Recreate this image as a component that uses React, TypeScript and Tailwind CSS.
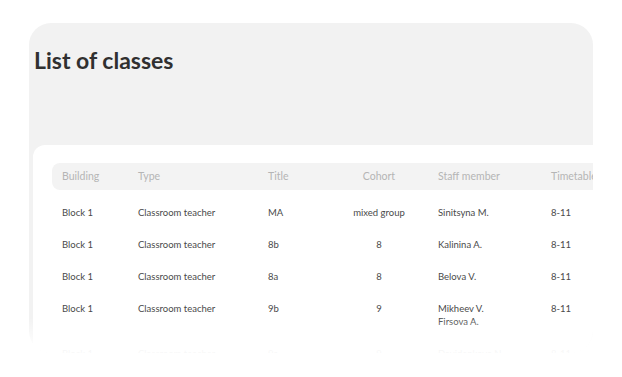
import React from 'react';

interface ClassRow {
  building: string;
  type: string;
  title: string;
  cohort: string;
  staff: string[];
  timetable: string;
}

const rows: ClassRow[] = [
  { building: 'Block 1', type: 'Classroom teacher', title: 'MA', cohort: 'mixed group', staff: ['Sinitsyna M.'], timetable: '8-11' },
  { building: 'Block 1', type: 'Classroom teacher', title: '8b', cohort: '8', staff: ['Kalinina A.'], timetable: '8-11' },
  { building: 'Block 1', type: 'Classroom teacher', title: '8a', cohort: '8', staff: ['Belova V.'], timetable: '8-11' },
  { building: 'Block 1', type: 'Classroom teacher', title: '9b', cohort: '9', staff: ['Mikheev V.', 'Firsova A.'], timetable: '8-11' },
  { building: 'Block 1', type: 'Classroom teacher', title: '9a', cohort: '9', staff: ['Davidenkova N.'], timetable: '8-11' },
];

// column template shared by header and rows
const cols = 'grid grid-cols-[86px_130px_52px_118px_113px_1fr]';

export default function App() {
  return (
    <div
      className="relative w-[622px] h-[377px] overflow-hidden bg-white pt-[23px] pl-[29px] pr-[29px]"
      style={{ fontFamily: 'Lato, "Noto Sans", sans-serif' }}
    >
      <div className="h-[330px] rounded-[22px] bg-[#f2f2f2] overflow-hidden">
        <h1 className="pt-[23px] pl-[5px] text-[23px] leading-[28px] font-bold text-[#303030]">
          List of classes
        </h1>

        <div className="mt-[71px] ml-[4px] w-[640px] rounded-tl-[12px] bg-white pt-[18px] pl-[19px] pb-10">
          <div className={`${cols} h-[27px] items-center rounded-l-[8px] bg-[#f3f3f3] text-[10.5px] text-[#b5b5b5]`}>
            <span className="pl-[10px]">Building</span>
            <span>Type</span>
            <span>Title</span>
            <span className="text-center">Cohort</span>
            <span>Staff member</span>
            <span>Timetable grid</span>
          </div>

          <div className="mt-[6px]">
            {rows.map((r, i) => (
              <div key={i} className={`${cols} pt-[10px] pb-[9px] text-[9.5px] leading-[13px] text-[#4a4a4a]`}>
                <span className="pl-[10px]">{r.building}</span>
                <span>{r.type}</span>
                <span>{r.title}</span>
                <span className="text-center">{r.cohort}</span>
                <span className="flex flex-col">
                  {r.staff.map((s) => (
                    <span key={s}>{s}</span>
                  ))}
                </span>
                <span>{r.timetable}</span>
              </div>
            ))}
          </div>
        </div>
      </div>

      {/* bottom fade over the list */}
      <div className="pointer-events-none absolute left-0 right-0 top-[318px] h-[59px] bg-gradient-to-b from-white/0 via-white/95 via-50% to-white" />
    </div>
  );
}
